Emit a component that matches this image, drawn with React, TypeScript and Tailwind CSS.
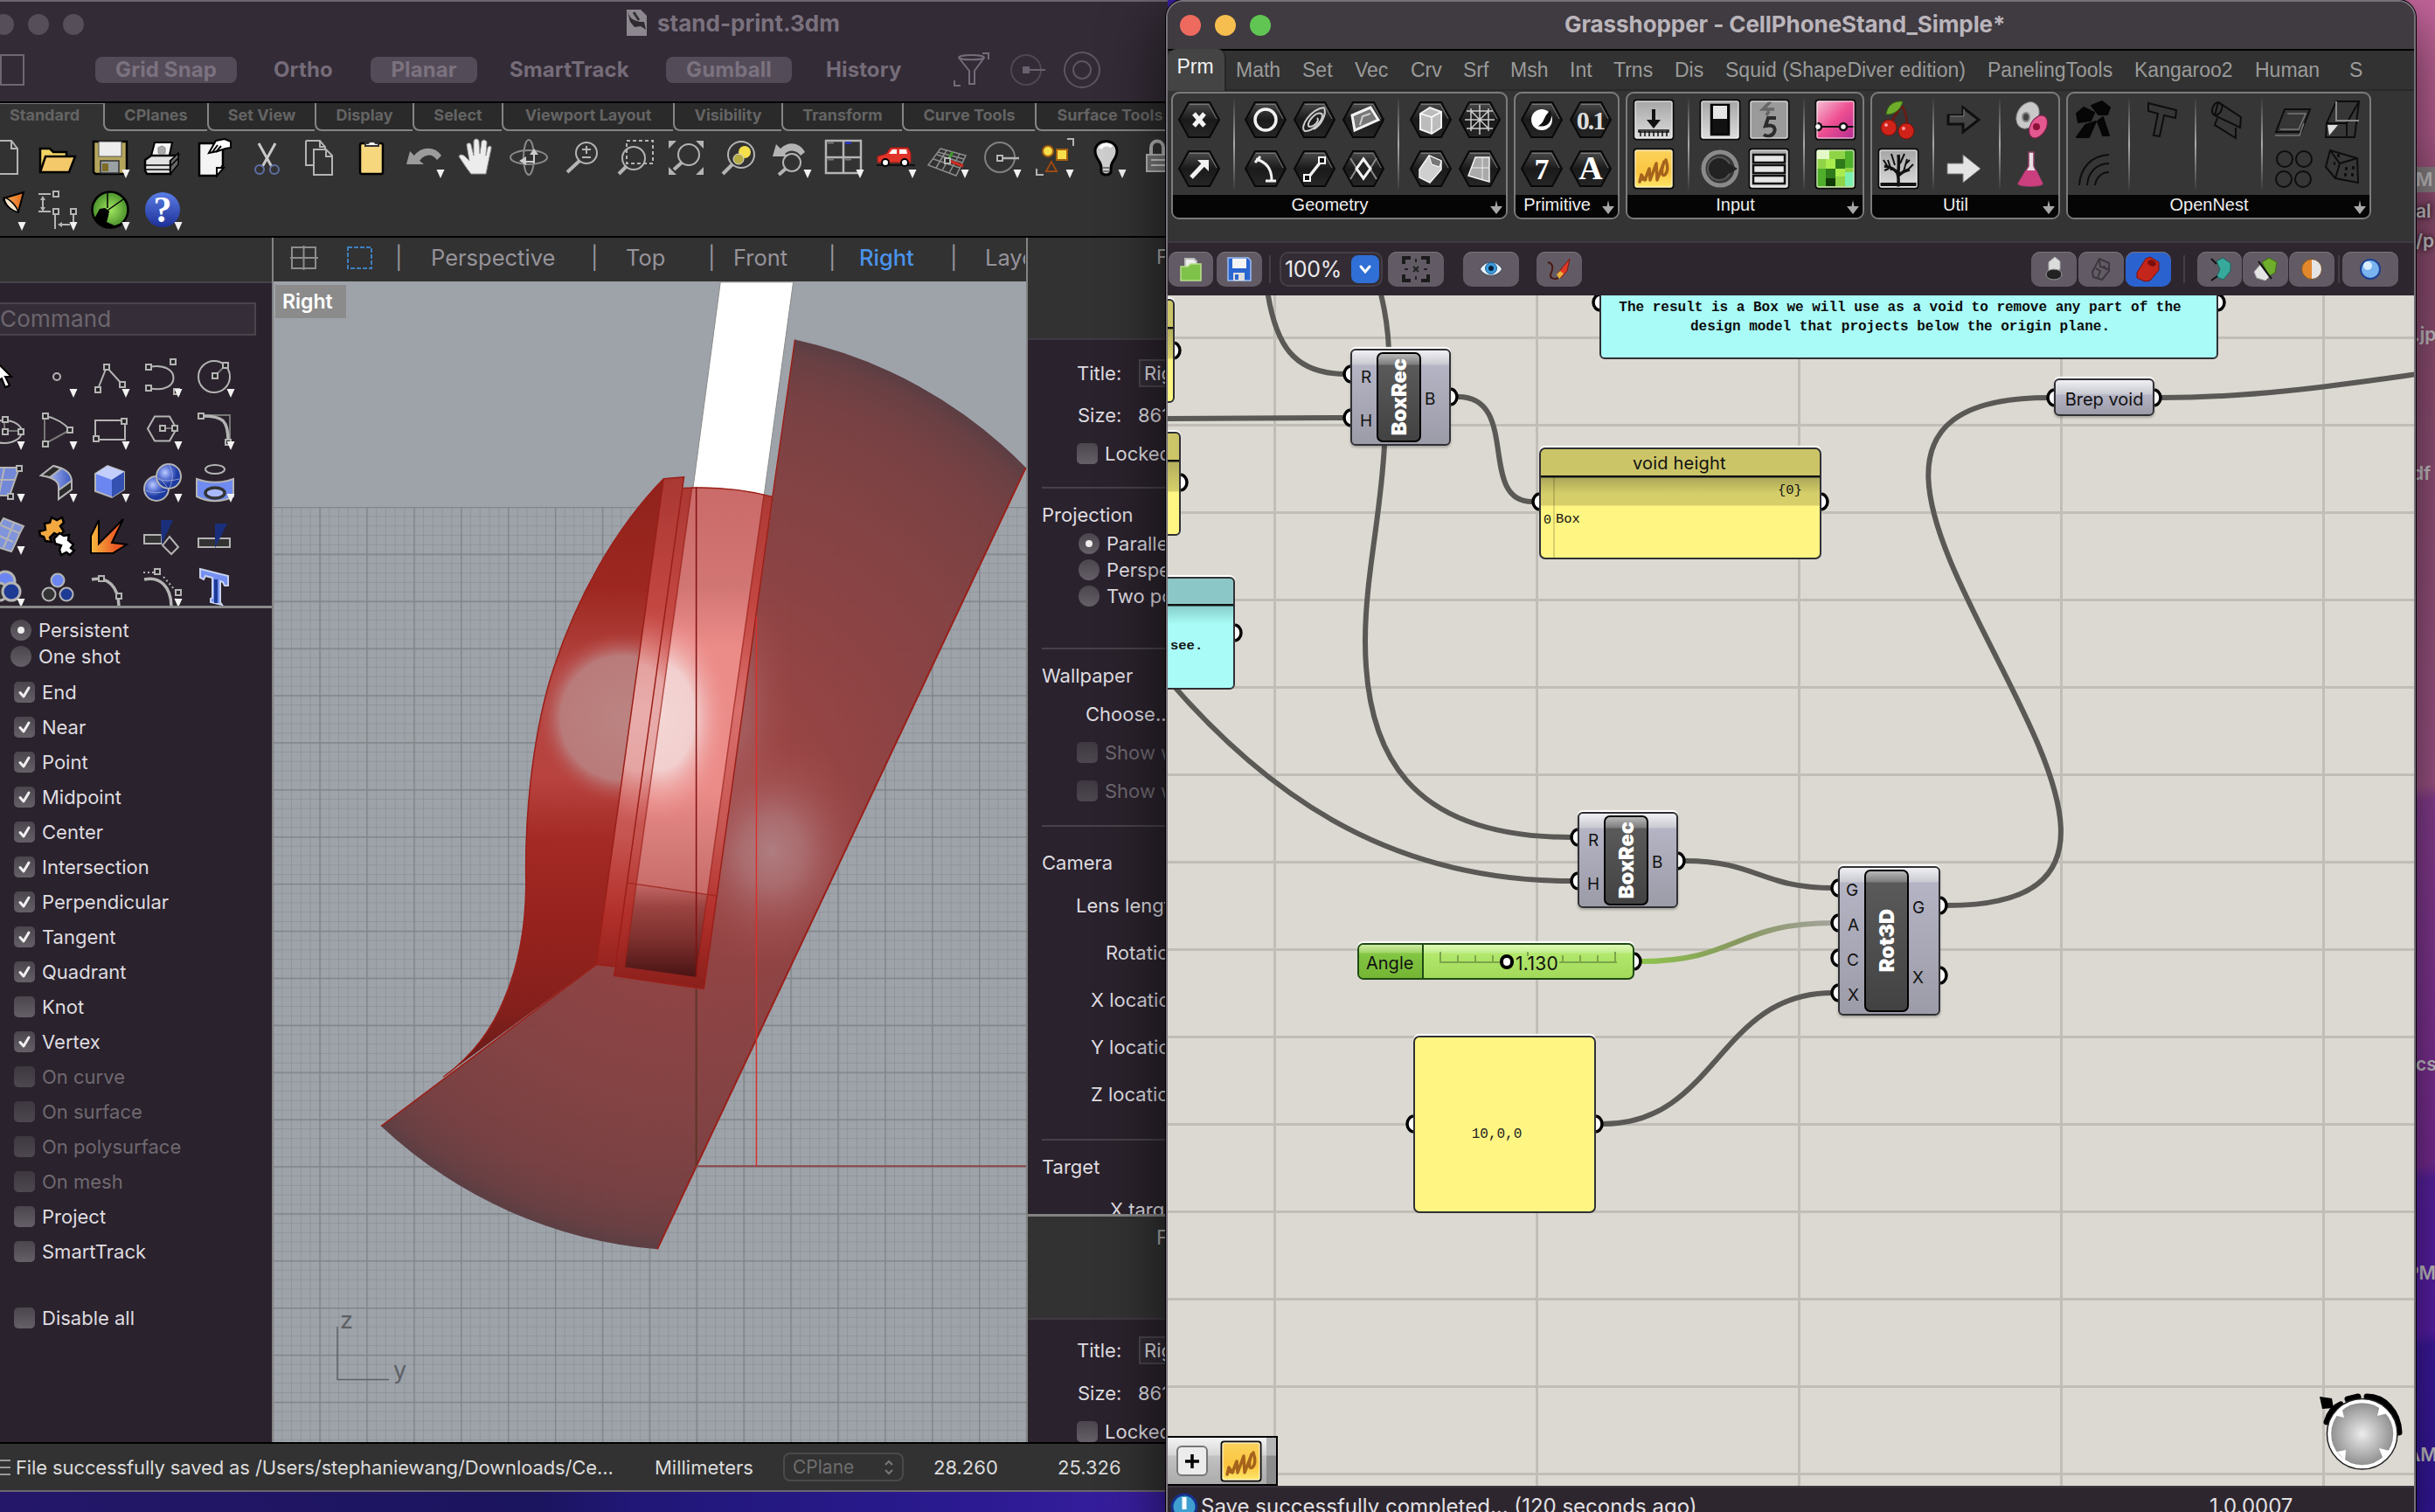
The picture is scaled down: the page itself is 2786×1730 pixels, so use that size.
import React from "react";

type Item = { at: number; node: React.ReactNode };

/* Horizontal run: each item starts at its own distance from the left edge of the row. */
function Line({ items, className = "" }: { items: Item[]; className?: string }) {
  return (
    <div className={"flex items-center " + className}>
      {items.map((it, i) => (
        <div
          key={i}
          className="flex w-0 shrink-0 items-center whitespace-nowrap leading-none"
          style={{ marginLeft: it.at - (i ? items[i - 1].at : 0) }}
        >
          {it.node}
        </div>
      ))}
    </div>
  );
}

/* Vertical run of 30px rows, each centred on its own distance from the top. */
function Stack({ items, className = "" }: { items: Item[]; className?: string }) {
  return (
    <div className={"flex flex-col " + className}>
      {items.map((it, i) => (
        <div
          key={i}
          className="flex h-[30px] shrink-0 items-center whitespace-nowrap leading-none"
          style={{ marginTop: it.at - (i ? items[i - 1].at + 30 : 15) }}
        >
          {it.node}
        </div>
      ))}
    </div>
  );
}

const G = "#b4b4b4";

function Cell({ children, tri = false }: { children?: React.ReactNode; tri?: boolean }) {
  return (
    <svg viewBox="0 0 60 60" className="h-[60px] w-[60px] shrink-0" fill="none" stroke={G} strokeWidth="2">
      {children}
      {tri && <path d="M44.500 44h9l-4.500 10z" fill="#f2f2f2" stroke="none" />}
    </svg>
  );
}

function Sq({ x, y }: { x: number; y: number }) {
  return <rect x={x - 3} y={y - 3} width="6" height="6" fill="#262626" stroke={G} strokeWidth="2" />;
}

function MainToolbar() {
  return (
    <div className="-ml-[25px] flex w-[1361px]">
      <Cell><path d="M12 11h26l7 9v29H12M38 11v9h7" /></Cell>
      <Cell>
        <path d="M11 46V20h11l4 4h15v6" fill="#f3d565" stroke="#000" strokeWidth="2.500" />
        <path d="M11 47l6-18h34l-7 18z" fill="#f4c96a" stroke="#000" strokeWidth="2.500" />
      </Cell>
      <Cell tri>
        <path d="M12 12h38v35l-2 2H14l-2-2z" fill="#b5a55c" stroke="#000" strokeWidth="2.500" />
        <rect x="18" y="12" width="26" height="17" fill="#ececec" stroke="#555" strokeWidth="1" />
        <rect x="20" y="34" width="21" height="14" fill="#9ba1a5" stroke="#333" strokeWidth="1.500" />
        <rect x="22" y="37" width="7" height="9" fill="#7e6c26" stroke="none" />
      </Cell>
      <Cell>
        <path d="M17 32l5-19h20l-4 19z" fill="#f5f5f5" stroke="#000" />
        <path d="M11 33l7-5h30l-8 6v15H13l-2-4z" fill="#e2e2e2" stroke="#000" strokeWidth="2.500" />
        <path d="M40 34l9-9v13l-9 11zM11 39h29M12 44h28M40 40l9-9" fill="#666" stroke="#000" strokeWidth="1.500" />
        <path d="M26 19l4-2 4 2v6l-4 2-4-2z" fill="#aaa" stroke="#888" strokeWidth="1" />
      </Cell>
      <Cell>
        <path d="M13 14h27v25l-7 12H13z" fill="#f4f4f4" stroke="#000" strokeWidth="2.500" />
        <path d="M33 51v-9h8z" fill="#fff" stroke="#000" />
        <path d="M24 25l8-14 10-2 7 3v7l-6 1-9 3z" fill="#fff" stroke="#000" />
        <path d="M28 24l6-8M32 24l6-7" stroke="#000" />
      </Cell>
      <Cell>
        <path d="M21 14l15 27M40 14L25 41" stroke="#c9c9c9" strokeWidth="3" />
        <circle cx="22" cy="44" r="5" stroke="#5e6fa5" /><circle cx="39" cy="44" r="5" stroke="#5e6fa5" />
      </Cell>
      <Cell>
        <path d="M15 11h16l6 7v4M15 11v28h8M31 11v7h6" />
        <path d="M24 21h14l7 7v22H24zM38 21v8h7" />
      </Cell>
      <Cell>
        <rect x="17" y="14" width="26" height="35" rx="2" fill="#f6d77e" stroke="#000" strokeWidth="2.500" />
        <path d="M23 17v-3h3l2-2h5l2 2h3v3z" fill="#f4f4f4" stroke="#333" />
      </Cell>
      <Cell tri><path d="M10 38l4-15 5 5c8-11 24-11 31 0l-5 5c-5-7-13-8-20 1l5 4z" fill="#9b9b9b" stroke="none" /></Cell>
      <Cell>
        <path d="M24 49c-5-6-10-14-14-20 1-3 5-2 7 0l5 5-3-18c0-3 5-3 5 0l3 12V12c0-4 6-4 6 0l1 14 2-14c1-3 6-2 6 1l-1 15 2-9c1-3 5-2 4 1l-4 19-2 10z" fill="#ececec" stroke="#8d8d8d" strokeWidth="1" />
      </Cell>
      <Cell>
        <ellipse cx="30" cy="30" rx="21" ry="8" stroke="#8a8a8a" /><ellipse cx="30" cy="30" rx="6" ry="20" stroke="#8a8a8a" />
        <path d="M31 27l5-7 5 7zM19 34l8-5v10z" fill="#ccc" stroke="none" /><path d="M36 22v15M24 35h12" stroke="#ccc" />
      </Cell>
      <Cell><circle cx="36" cy="25" r="12" /><path d="M28 34L14 47" strokeWidth="4" /><path d="M36 17v9M31 21h10M31 30h10" /></Cell>
      <Cell><path d="M22 11h30v26H22z" strokeDasharray="4 3" /><circle cx="30" cy="31" r="13" /><path d="M22 40l-9 9" strokeWidth="4" /></Cell>
      <Cell>
        <path d="M10 11h9l-9 9zM50 11h-9l9 9zM10 50v-9l9 9zM50 50h-9l9-9z" fill={G} stroke="none" />
        <circle cx="33" cy="27" r="12" /><path d="M25 36l-9 8" strokeWidth="4" />
      </Cell>
      <Cell><circle cx="33" cy="27" r="15" /><circle cx="37" cy="24" r="7" fill="#f4df4a" stroke="none" /><circle cx="30" cy="32" r="6" fill="#b5ab45" stroke="#ddd" strokeWidth="1" /><path d="M23 38L12 49" strokeWidth="4" /></Cell>
      <Cell tri><path d="M9 29l4-14 5 5c9-9 22-7 28 4l-5 4c-4-6-12-8-18-2l4 3z" fill={G} stroke="none" /><circle cx="31" cy="36" r="10" /><path d="M24 43l-8 7" strokeWidth="4" /></Cell>
      <Cell tri><path d="M10 11h40v37H10zM30 11v37M10 30h40" strokeWidth="2.500" /><path d="M32 13.500h7" stroke="#2a36b5" strokeWidth="3" /><path d="M12 13.500h7M12 32.500h7M32 32.500h7" stroke="#777" strokeWidth="2" /></Cell>
      <Cell tri>
        <path d="M8 39h44" stroke="#111" />
        <path d="M9 36v-7l10-3 5-7h20l3 6v11z" fill="#e0342b" stroke="#a31a15" strokeWidth="1" />
        <path d="M22 26l4-5h5v5zM34 21h8l1 5h-9z" fill="#fff" stroke="none" /><circle cx="18" cy="36" r="4" fill="#fff" stroke="#000" /><circle cx="40" cy="36" r="4" fill="#fff" stroke="#000" />
      </Cell>
      <Cell tri>
        <path d="M21 20l29 8-11 23-32-12zM28 22L16 42M35 24L23 45M43 26L31 48M17 27l29 9M13 32l30 10M18 24l30 8" stroke="#8d8d8d" strokeWidth="1.500" />
        <path d="M29 34l6-10" stroke="#3f9b2d" strokeWidth="3" /><path d="M31 34l16 6" stroke="#d02a1e" strokeWidth="3" /><Sq x={29} y={34} />
      </Cell>
      <Cell tri><circle cx="29" cy="30" r="17" stroke="#808080" /><path d="M32 31h19" strokeWidth="2.500" /><Sq x={29} y={31} /></Cell>
      <Cell tri>
        <path d="M46 9h7v8M11 43v7h8" /><circle cx="24" cy="23" r="6" fill="#f7df4c" stroke="#a5600f" /><rect x="34" y="21" width="12" height="12" fill="#f7df4c" stroke="#a5600f" /><path d="M22 46l6-11 6 11z" stroke="#9a4a12" />
      </Cell>
      <Cell tri>
        <path d="M25 42c0-8-7-10-7-19 0-15 25-15 25 0 0 9-7 11-7 19v5c-2 4-9 4-11 0z" fill="#cfcfcf" stroke="#000" strokeWidth="3" /><path d="M24 20c2-5 9-6 13-2" stroke="#fff" strokeWidth="4" /><path d="M27 42h7M27 46h7" stroke="#777" />
      </Cell>
      <Cell><path d="M22 27v-8c0-10 14-10 14 0v8" strokeWidth="4" /><rect x="17" y="27" width="26" height="19" fill="#777" stroke="#bbb" /><path d="M22 33h16M22 39h16" stroke="#ccc" /></Cell>
    </div>
  );
}

function SecondToolbar() {
  return (
    <div className="-ml-[25px] flex">
      <Cell>
        <defs><linearGradient id="cone" x2="1"><stop offset="0" stopColor="#f6b25a" /><stop offset="1" stopColor="#e26a1c" /></linearGradient></defs>
        <path d="M29 17l23-7-6 22c-9-2-16-8-17-15z" fill="url(#cone)" stroke="#000" /><path d="M30 16c5 1 14 9 16 17-8-2-16-9-16-17z" fill="#f8e6cc" stroke="#000" strokeWidth="1.500" />
        <path d="M45.500 44h9l-4.500 10z" fill="#f2f2f2" stroke="none" />
      </Cell>
      <Cell tri><path d="M9 12h14M9 32h14M28 36v16M49 32v16M14 16v14M33 47h12" /><path d="M11 19l3-5 3 5zM11 27l3 5 3-5zM36 44l-5 3 5 3z" fill={G} stroke="none" /><Sq x={29} y={12} /><Sq x={29} y={32} /><Sq x={49} y={32} /></Cell>
      <Cell tri>
        <defs><radialGradient id="gh"><stop offset="0" stopColor="#a4e862" /><stop offset="1" stopColor="#48902a" /></radialGradient></defs>
        <circle cx="31" cy="30" r="20.500" fill="url(#gh)" stroke="#000" strokeWidth="2.500" />
        <path d="M28 10v18M46 18L29 30" stroke="#000" strokeWidth="1.500" /><path d="M13 40l6-11 6-1 5 3-1 6-2 7 9 4 9-3-2 4-9 2-4 0-8-3-5-2z" fill="#000" stroke="none" />
      </Cell>
      <Cell tri>
        <defs><linearGradient id="hp" x2="0" y2="1"><stop offset="0" stopColor="#5a7ee6" /><stop offset="1" stopColor="#1d2f96" /></linearGradient></defs>
        <circle cx="31" cy="30" r="20" fill="url(#hp)" stroke="none" />
        <text x="31" y="44" textAnchor="middle" className="font-['Liberation_Serif'] text-[42px] font-bold" fill="#fff" stroke="none">?</text>
      </Cell>
    </div>
  );
}

function Palette() {
  return (
    <div className="-ml-[25px] grid h-[292px] w-[300px] grid-cols-[repeat(5,60px)] auto-rows-[60px] overflow-hidden">
      <Cell><path d="M22 14v22l5-4 4 10 5-2-5-10h7z" fill="#fff" stroke="#000" /></Cell>
      <Cell tri><circle cx="30" cy="30" r="4" /></Cell>
      <Cell tri><path d="M17 44L27 19l18 20" /><Sq x={17} y={45} /><Sq x={27} y={19} /><Sq x={45} y={39} /></Cell>
      <Cell tri><path d="M15 19c38-8 38 33 0 24" /><Sq x={15} y={19} /><Sq x={43} y={13} /><Sq x={15} y={43} /><Sq x={47} y={47} /></Cell>
      <Cell tri><circle cx="30" cy="30" r="18" /><path d="M31 29l12-12" stroke="#777" /><Sq x={31} y={29} /><Sq x={43} y={17} /></Cell>

      <Cell tri><ellipse cx="30" cy="33" rx="20" ry="13" /><path d="M30 20v12h18" stroke="#777" /><Sq x={31} y={19} /><Sq x={31} y={33} /><Sq x={49} y={33} /></Cell>
      <Cell tri><path d="M16 15v32l29-16" stroke="#777" /><path d="M17 15c12 2 22 9 27 15" /><Sq x={17} y={15} /><Sq x={17} y={47} /><Sq x={45} y={31} /></Cell>
      <Cell tri><path d="M14 20h34v22H14z" /><Sq x={47} y={21} /><Sq x={15} y={41} /></Cell>
      <Cell tri><path d="M22 15.500h17l8 14-8 14H22l-8-14z" /><path d="M31 29h14" stroke="#777" /><Sq x={31} y={29} /><Sq x={45} y={29} /></Cell>
      <Cell tri><path d="M15 14h33v30" stroke="#777" /><path d="M17 15c24 0 29 6 29 29" strokeWidth="3.500" /><Sq x={15} y={15} /><Sq x={46} y={45} /></Cell>

      <Cell tri><path d="M12 14h35L36 46H12z" fill="#7488d8" stroke={G} /><path d="M12 28h30M30 14l-6 30" /><Sq x={47} y={15} /><Sq x={37} y={47} /></Cell>
      <Cell tri>
        <defs><linearGradient id="shl"><stop offset="0" stopColor="#c9d4ff" /><stop offset="1" stopColor="#3c58c0" /></linearGradient></defs>
        <path d="M12 23l14-11c15 3 21 10 21 18v9L32 50V36c0-6-7-11-20-13z" fill="url(#shl)" /><path d="M12 23l14-11 9 3-13 10z" fill="#2a2a2a" /><path d="M32 50V40l15-11v10z" fill="#2a2a2a" />
      </Cell>
      <Cell tri>
        <path d="M14 21l14-9 19 7v20l-14 9-19-7z" fill="#6b86f0" /><path d="M14 21l14-9 19 7-14 9z" fill="#c3cffa" stroke="none" /><path d="M33 28l14-9v20l-14 9z" fill="#3450b0" stroke="none" />
      </Cell>
      <Cell tri>
        <defs><radialGradient id="sp" cx=".35" cy=".35"><stop offset="0" stopColor="#bccaff" /><stop offset=".5" stopColor="#6179d8" /><stop offset="1" stopColor="#1c3aa0" /></radialGradient></defs>
        <circle cx="24" cy="38" r="14" fill="url(#sp)" /><circle cx="38" cy="24" r="14" fill="url(#sp)" /><path d="M24 25c7 3 10 8 13 13M12 40c8 4 15 3 22 1M38 10c6 10 5 18 1 27M26 27c8 3 16 2 24 0" strokeWidth="1" stroke="#93a0cf" />
      </Cell>
      <Cell tri>
        <ellipse cx="31" cy="16" rx="11" ry="5" /><path d="M10 27c13 5 29 5 42 0v20c-13 7-29 7-42 0z" fill="#6f8bf0" /><ellipse cx="31" cy="43" rx="11" ry="6" fill="#a9baff" stroke="#333" strokeWidth="3.500" />
      </Cell>

      <Cell tri><path d="M29 12l23 9c-6 10-8 18-14 29L12 42z" fill="#8094dc" /><path d="M26 20l21 9M22 31l18 8M41 17L29 46" /></Cell>
      <Cell>
        <path d="M10 27l7-2-1-7 6-1 2-6 6 3 6-3 2 6-4 4 4 6-5 5-6-3-5 5 2 5-7-1-2-5-4-1z" fill="#f3a93f" stroke="#000" strokeWidth="2.500" />
        <path d="M27 35l6-6 5 3 6-1-1 6 6 5-3 4 4 3-5 5-4-3-6 3-2-6 2-5-7-2z" fill="#fff" stroke="#000" strokeWidth="2.500" />
      </Cell>
      <Cell>
        <defs><linearGradient id="ex" x2="1" y2="0"><stop offset="0" stopColor="#f7b93e" /><stop offset=".7" stopColor="#ec5a25" /></linearGradient></defs>
        <path d="M9 52V32l9-18v27L46 13 33 40l17 2-16 10z" fill="url(#ex)" stroke="#000" strokeWidth="2" />
      </Cell>
      <Cell><path d="M10 31h20v10H10z" fill="#333" /><path d="M31 43l8-10 10 12-8 8z" /><path d="M29 14h14L30 42z" fill="#1a2f7c" stroke="none" /></Cell>
      <Cell><path d="M12 35h36v10H12z" fill="#333" /><path d="M31 18h14L31 46z" fill="#1a2f7c" stroke="none" /></Cell>

      <Cell tri><circle cx="31" cy="24" r="11" fill="#6b86f0" strokeWidth="3" /><circle cx="24" cy="36" r="10" fill="#333" strokeWidth="3" /><circle cx="38" cy="36" r="10" fill="#1d3a94" strokeWidth="3" /></Cell>
      <Cell><circle cx="31" cy="23" r="7.500" fill="#6b86f0" /><circle cx="21" cy="39" r="7.500" fill="#333" /><circle cx="41" cy="39" r="7.500" fill="#1d3a94" /></Cell>
      <Cell><path d="M10 22c18-4 31 8 31 32" strokeWidth="3.500" /><Sq x={21} y={21} /><Sq x={41} y={41} /></Cell>
      <Cell tri><path d="M10 22c18-4 31 8 31 32" strokeWidth="3.500" /><path d="M9 14h14M32 19l14 16v12" strokeDasharray="2 3" /><Sq x={25} y={13} /><Sq x={49} y={37} /></Cell>
      <Cell><path d="M14 10l32 8v11h-4l-2-4-3-1v24l2 3-13-3v-4l2-1V20l-8-2-2 4-4-2z" fill="#7590f2" stroke="#c9d2ee" /><path d="M32 22v27" stroke="#1d3a94" strokeWidth="4" /></Cell>
    </div>
  );
}

function Check({ on = false, dim = false }: { on?: boolean; dim?: boolean }) {
  return (
    <div className={"flex h-6 w-6 items-center justify-center rounded-[5px] bg-gradient-to-b from-[#4b464d] to-[#656068] " + (dim ? "opacity-60" : "")}>
      {on && (
        <svg viewBox="0 0 24 24" className="h-6 w-6" fill="none" stroke="#f0eff0" strokeWidth="3" strokeLinecap="round" strokeLinejoin="round"><path d="M7 12.500l4 4.500 6-10" /></svg>
      )}
    </div>
  );
}

function Radio({ on = false }: { on?: boolean }) {
  return (
    <div className="flex h-6 w-6 items-center justify-center rounded-full bg-gradient-to-b from-[#4b464d] to-[#656068]">
      {on && <div className="h-[8px] w-[8px] rounded-full bg-[#eee]" />}
    </div>
  );
}

const SNAPS: [string, boolean, boolean, number][] = [
  ["End", true, false, 792], ["Near", true, false, 832], ["Point", true, false, 872], ["Midpoint", true, false, 912],
  ["Center", true, false, 952], ["Intersection", true, false, 992], ["Perpendicular", true, false, 1032],
  ["Tangent", true, false, 1072], ["Quadrant", true, false, 1112], ["Knot", false, false, 1152], ["Vertex", true, false, 1192],
  ["On curve", false, true, 1232], ["On surface", false, true, 1272], ["On polysurface", false, true, 1312],
  ["On mesh", false, true, 1352], ["Project", false, false, 1392], ["SmartTrack", false, false, 1432], ["Disable all", false, false, 1508],
];

function LeftPanel() {
  return (
    <div className="flex h-[1378px] w-[311px] shrink-0 flex-col overflow-hidden bg-[#2a222c]">
      <div className="h-[52px] shrink-0 border-b-2 border-[#48434a] bg-[#323232]" />
      <div className="mt-[22px] flex h-[38px] w-[293px] shrink-0 items-center border-2 border-l-0 border-[#4a444c] bg-[#352e38] pb-[2px] text-[26px] tracking-[0.200px] text-[#6c666e]">Command</div>
      <div className="mt-[17px] shrink-0"><Palette /></div>
      <div className="h-[3px] shrink-0 bg-[#8a8a8a]" />
      <Stack
        className="text-[22px] text-[#dfdce0]"
        items={[
          { at: 25, node: <div className="ml-3 flex items-center gap-[8px]"><Radio on /><span>Persistent</span></div> },
          { at: 55, node: <div className="ml-3 flex items-center gap-[8px]"><Radio /><span>One shot</span></div> },
          ...SNAPS.map(([t, on, dim, y]) => ({
            at: y - 696,
            node: <div className="ml-4 flex items-center gap-[8px]"><Check on={on} dim={dim} /><span className={dim ? "text-[#6f6971]" : ""}>{t}</span></div>,
          })),
        ]}
      />
    </div>
  );
}

function Model() {
  const ns = "non-scaling-stroke" as const;
  return (
    <svg viewBox="313 322 861 1328" className="block h-[1328px] w-[861px]">
      <defs>
        <pattern id="minor" x="796.600" y="1334.300" width="10.780" height="10.780" patternUnits="userSpaceOnUse"><path d="M0 .5H10.780M.5 0V10.780" stroke="#8f959b" strokeWidth="1" fill="none" /></pattern>
        <pattern id="major" x="796.600" y="1334.300" width="53.900" height="53.900" patternUnits="userSpaceOnUse"><path d="M0 .7H53.900M.7 0V53.900" stroke="#808588" strokeWidth="1.500" fill="none" /></pattern>
        <linearGradient id="lobe" gradientUnits="userSpaceOnUse" x1="0" y1="319" x2="0" y2="1280">
          <stop offset="0" stopColor="#8f231c" /><stop offset=".18" stopColor="#9d2720" /><stop offset=".32" stopColor="#b54541" /><stop offset=".5" stopColor="#b8433f" /><stop offset=".6" stopColor="#a42a25" /><stop offset=".75" stopColor="#96221d" /><stop offset=".88" stopColor="#85201c" /><stop offset="1" stopColor="#601a19" />
        </linearGradient>
        <linearGradient id="strip" gradientUnits="userSpaceOnUse" x1="0" y1="319" x2="0" y2="1136">
          <stop offset="0" stopColor="#aa3833" /><stop offset=".25" stopColor="#c34641" /><stop offset=".45" stopColor="#d9706d" /><stop offset=".7" stopColor="#c65450" /><stop offset=".85" stopColor="#b3302b" /><stop offset="1" stopColor="#8a1f1b" />
        </linearGradient>
        <linearGradient id="inner" gradientUnits="userSpaceOnUse" x1="0" y1="332" x2="0" y2="975">
          <stop offset="0" stopColor="#ca6a69" /><stop offset=".25" stopColor="#d27674" /><stop offset=".4" stopColor="#ec8c89" /><stop offset=".75" stopColor="#ec8c89" /><stop offset=".9" stopColor="#d47a77" /><stop offset="1" stopColor="#c96d6b" />
        </linearGradient>
        <linearGradient id="foot" gradientUnits="userSpaceOnUse" x1="0" y1="968" x2="0" y2="1117"><stop offset="0" stopColor="#c46866" /><stop offset=".25" stopColor="#9a4340" /><stop offset=".6" stopColor="#7c302e" /><stop offset="1" stopColor="#4a1313" /></linearGradient>
        <radialGradient id="body" gradientUnits="userSpaceOnUse" cx="0" cy="0" r="1" gradientTransform="translate(778 818) scale(1090 740)"><stop offset="0" stopColor="#a24240" /><stop offset=".35" stopColor="#924040" /><stop offset=".7" stopColor="#823f40" /><stop offset=".88" stopColor="#763d3f" /><stop offset=".96" stopColor="#673c3f" /><stop offset="1" stopColor="#583a3f" /></radialGradient>
        <radialGradient id="glow"><stop offset="0" stopColor="#af7d80" /><stop offset=".3" stopColor="#ad7275" stopOpacity=".85" /><stop offset=".65" stopColor="#a85a5b" stopOpacity=".4" /><stop offset="1" stopColor="#a54848" stopOpacity="0" /></radialGradient>
        <radialGradient id="spot"><stop offset="0" stopColor="#bb8482" /><stop offset=".72" stopColor="#b97b7a" /><stop offset=".85" stopColor="#b75957" stopOpacity=".75" /><stop offset="1" stopColor="#b54541" stopOpacity="0" /></radialGradient>
        <radialGradient id="shine"><stop offset="0" stopColor="#f4d6d5" /><stop offset=".5" stopColor="#f1cfce" /><stop offset="1" stopColor="#ec8c89" stopOpacity="0" /></radialGradient>
        <clipPath id="cl"><path d="M700 319C590 395 490 510 430 645C390 740 372 860 375 965C375 1050 350 1110 325 1150C290 1210 235 1250 180 1277L541 1097z" /></clipPath>
        <clipPath id="ci"><path d="M767 332Q860 332 937 344L804 985L635 968z" /></clipPath>
        <clipPath id="cs"><path d="M700 319L748 316L744 334Q860 330 957 348L795 1136L583 1115V1100L541 1097z" /></clipPath>
        <clipPath id="cb"><path d="M1010 96L1555 301L685 1553L777 1136L795 1136z" /></clipPath>
      </defs>
      <rect x="313" y="322" width="861" height="1328" fill="#9ea3aa" />
      <rect x="313" y="580" width="861" height="1070" fill="url(#minor)" />
      <rect x="313" y="580" width="861" height="1070" fill="url(#major)" />
      <g transform="translate(420 320) scale(.4847 .7143)">
        <path d="M834 4H1006L937 346H767z" fill="#fff" stroke="#8a8a8a" strokeWidth="1" vectorEffect={ns} />
        <path d="M1010 96A1087 738 0 0 1 1555 301L685 1553A1087 738 0 0 1 33 1356L541 1097L583 1100V1115L795 1136z" fill="url(#body)" fillOpacity=".96" />
        <g clipPath="url(#cb)"><ellipse cx="955" cy="915" rx="250" ry="190" fill="url(#glow)" /><ellipse cx="860" cy="680" rx="150" ry="230" fill="url(#glow)" opacity=".55" /></g>
        <g clipPath="url(#cl)"><rect x="150" y="300" width="600" height="1000" fill="url(#lobe)" /><ellipse cx="605" cy="702" rx="205" ry="138" fill="url(#spot)" /></g>
        <g clipPath="url(#cs)"><rect x="500" y="300" width="500" height="860" fill="url(#strip)" /><ellipse cx="640" cy="702" rx="150" ry="170" fill="url(#shine)" opacity=".6" /></g>
        <g clipPath="url(#ci)"><rect x="600" y="320" width="400" height="700" fill="url(#inner)" /><ellipse cx="690" cy="700" rx="165" ry="170" fill="url(#shine)" /></g>
        <path d="M635 968L804 985L776 1117L608 1101z" fill="url(#foot)" />
        <g fill="none" stroke="#9a1f18" strokeWidth="1.500">
          <path vectorEffect={ns} d="M700 319C590 395 490 510 430 645C390 740 372 860 375 965C375 1050 350 1110 325 1150C290 1210 235 1250 180 1277" />
          <path vectorEffect={ns} d="M700 319L748 316L583 1115L795 1136L957 348Q860 330 744 334M700 319L541 1097L583 1100M957 348L1010 96M541 1097L33 1356" />
          <path vectorEffect={ns} d="M613 966L825 987M767 332L608 1101M937 344L776 1117" strokeOpacity=".7" />
          <path vectorEffect={ns} d="M1555 301L685 1553" strokeWidth="2" />
          <path vectorEffect={ns} d="M777 332V1117" stroke="#7e1210" />
          <path vectorEffect={ns} d="M777 1136V1420" stroke="#5e3526" strokeWidth="2" />
          <path vectorEffect={ns} d="M777 1420H1556" stroke="#8c4648" strokeWidth="2" />
          <path vectorEffect={ns} d="M919 540V1420" stroke="#d7302a" />
        </g>
      </g>
      <path d="M386 1518V1578.500H445" stroke="#5d6064" strokeWidth="1.500" fill="none" />
      <text x="389" y="1520" className="font-['Inter'] text-[27px]" fill="#5d6064">z</text>
      <text x="450" y="1577" className="font-['Inter'] text-[27px]" fill="#5d6064">y</text>
    </svg>
  );
}

function ViewportArea() {
  return (
    <div className="flex w-[865px] shrink-0 flex-col border-l-2 border-r-2 border-[#838383] bg-[#323232]">
      <Line
        className="h-[50px] shrink-0 pb-[4px] text-[25.500px] text-[#96939a]"
        items={[
          { at: 19, node: <svg viewBox="0 0 32 28" className="h-7 w-8 shrink-0" fill="none" stroke="#8d8d8d" strokeWidth="2"><rect x="2" y="2" width="27" height="24" /><path d="M15.500 0v28M0 14h32" /></svg> },
          { at: 83, node: <svg viewBox="0 0 32 28" className="h-7 w-8 shrink-0" fill="none" stroke="#3f7fc0" strokeWidth="2"><rect x="2" y="2" width="27" height="24" strokeDasharray="5 2" /></svg> },
          { at: 139, node: "|" }, { at: 180, node: "Perspective" }, { at: 363, node: "|" }, { at: 403, node: "Top" }, { at: 497, node: "|" },
          { at: 526, node: "Front" }, { at: 635, node: "|" }, { at: 670, node: <span className="font-medium text-[#4a93ea]">Right</span> },
          { at: 774, node: "|" }, { at: 814, node: <span className="block w-[46px] shrink-0 overflow-hidden leading-[34px]">Layout</span> },
        ]}
      />
      <div className="relative">
        <Model />
        <div className="absolute left-[2px] top-[4px] flex h-[38px] w-[81px] items-center bg-[#8b8b8b] pl-2 text-[23px] font-semibold text-white">Right</div>
      </div>
    </div>
  );
}

const Sep = () => <div className="ml-4 h-[2px] w-[142px] bg-[#48414a]" />;

function RightPanel() {
  const ind = (n: number, t: React.ReactNode) => ({ at: n, node: t });
  const title = <div className="flex items-center"><span className="ml-[56px] w-[71px]">Title:</span><div className="flex h-8 w-16 items-center border-2 border-[#4a444c] bg-[#312a34] pl-1">Right</div></div>;
  const size = <div className="flex"><span className="ml-[57px] w-[69px]">Size:</span>861</div>;
  const lock = <div className="ml-[56px] flex items-center gap-2"><Check />Locked</div>;
  return (
    <div className="flex h-[1378px] w-[160px] shrink-0 flex-col overflow-hidden bg-[#2a222c] text-[22px] text-[#dfdce0]">
      <div className="h-[117px] shrink-0 border-b-2 border-[#3f3841] bg-[#323232]"><div className="ml-[147px] mt-[8px] text-[23px] leading-[28px] text-[#aaa]">F</div></div>
      <Stack
        className="h-[1000px] shrink-0 overflow-hidden"
        items={[
          ind(38, title), ind(86, size), ind(130, lock), ind(169, <Sep />),
          ind(200, <span className="ml-4">Projection</span>),
          ind(233, <div className="ml-[58px] flex items-center gap-2"><Radio on />Parallel</div>),
          ind(263, <div className="ml-[58px] flex items-center gap-2"><Radio />Perspective</div>),
          ind(293, <div className="ml-[58px] flex items-center gap-2"><Radio />Two point</div>),
          ind(353, <Sep />), ind(384, <span className="ml-4">Wallpaper</span>),
          ind(428, <span className="ml-[66px]">Choose...</span>),
          ind(472, <div className="ml-[56px] flex items-center gap-2 text-[#6f6971]"><Check dim />Show wallpaper</div>),
          ind(516, <div className="ml-[56px] flex items-center gap-2 text-[#6f6971]"><Check dim />Show wallpaper</div>),
          ind(556, <Sep />), ind(598, <span className="ml-4">Camera</span>),
          ind(647, <span className="ml-[55px]">Lens length</span>), ind(701, <span className="ml-[89px]">Rotation</span>),
          ind(755, <span className="ml-[72px]">X location</span>), ind(809, <span className="ml-[72px]">Y location</span>), ind(863, <span className="ml-[72px]">Z location</span>),
          ind(915, <Sep />), ind(946, <span className="ml-4">Target</span>), ind(995, <span className="ml-[94px]">X target</span>),
        ]}
      />
      <div className="h-[3px] shrink-0 bg-[#838383]" />
      <div className="h-[118px] shrink-0 border-b-2 border-[#3f3841] bg-[#323232]"><div className="ml-[147px] mt-[10px] text-[23px] leading-[28px] text-[#aaa]">F</div></div>
      <Stack items={[ind(35, title), ind(84, size), ind(128, lock)]} />
    </div>
  );
}

function RhinoTab({ w, children }: { w: string; children: React.ReactNode }) {
  return (
    <div className={"flex h-8 shrink-0 items-start justify-center overflow-hidden whitespace-nowrap rounded-bl-[8px] border-b-2 border-l-2 border-[#858585] bg-[#2a2a2a] " + w}>{children}</div>
  );
}

const Pill = ({ children, w }: { children: React.ReactNode; w: string }) => (
  <div className={"flex h-[30px] shrink-0 items-center justify-center rounded-[8px] bg-[#544b58] text-[#7b727f] " + w}>{children}</div>
);

function Rhino() {
  return (
    <div className="absolute left-0 top-0 flex h-[1707px] w-[1336px] flex-col overflow-hidden border-b-2 border-t-2 border-[#6c6570] bg-[#332b36]">
      <Line
        className="h-[52px] shrink-0"
        items={[
          { at: -8, node: <div className="h-6 w-6 shrink-0 rounded-full bg-[#564e59]" /> },
          { at: 32, node: <div className="h-6 w-6 shrink-0 rounded-full bg-[#564e59]" /> },
          { at: 72, node: <div className="h-6 w-6 shrink-0 rounded-full bg-[#564e59]" /> },
          { at: 717, node: <svg viewBox="0 0 23 30" className="mb-[4px] h-[30px] w-[23px] shrink-0"><path d="M0 0h16l7 7v23H0z" fill="#8d888f" /><path d="M1 2c3 10 8 10 14 12l5 0 2 9-6-4-7 1-5-6z" fill="#2e2a30" /><path d="M8 3l6 9" stroke="#333" strokeWidth="3" /></svg> },
          { at: 752, node: <span className="pb-[3px] text-[26px] font-bold text-[#7a717e]">stand-print.3dm</span> },
        ]}
      />
      <Line
        className="h-[62px] shrink-0 pb-[10px] text-[24px] font-bold tracking-[0.100px] text-[#756c79]"
        items={[
          { at: 0, node: <div className="h-[36px] w-[28px] shrink-0 border-2 border-[#6f6673]" /> },
          { at: 109, node: <Pill w="w-[162px]">Grid Snap</Pill> }, { at: 313, node: "Ortho" },
          { at: 424, node: <Pill w="w-[122px]">Planar</Pill> }, { at: 583, node: "SmartTrack" },
          { at: 762, node: <Pill w="w-[144px]">Gumball</Pill> }, { at: 945, node: "History" },
          { at: 1090, node: <svg viewBox="0 0 44 44" className="h-11 w-11 shrink-0" fill="none" stroke="#756c79" strokeWidth="2"><path d="M34 3h7v7M2 34v6h7M7 8c0-4 29-4 29 0l-11 15v15h-6V23zM7 8c3 3 26 3 29 0" /></svg> },
          { at: 1154, node: <svg viewBox="0 0 44 44" className="h-11 w-11 shrink-0" fill="none" stroke="#4f4753" strokeWidth="2"><circle cx="20" cy="22" r="17" /><path d="M18 22h24" stroke="#6a616e" /><rect x="16" y="18" width="8" height="8" fill="#6a616e" stroke="none" /></svg> },
          { at: 1216, node: <svg viewBox="0 0 44 44" className="h-11 w-11 shrink-0" fill="none" stroke="#5d5561" strokeWidth="2"><circle cx="22" cy="22" r="20" /><circle cx="22" cy="22" r="10" /></svg> },
        ]}
      />
      <div className="flex h-[34px] shrink-0 border-t-2 border-black bg-[#323232] text-[18px] font-bold text-[#646464]">
        <div className="w-[118px] shrink-0 border-t border-[#777] pl-[11px]"><span className="relative -top-px">Standard</span></div>
        <RhinoTab w="w-[119px]">CPlanes</RhinoTab><RhinoTab w="w-[123px]">Set View</RhinoTab><RhinoTab w="w-[112px]">Display</RhinoTab>
        <RhinoTab w="w-[102px]">Select</RhinoTab><RhinoTab w="w-[196px]">Viewport Layout</RhinoTab><RhinoTab w="w-[124px]">Visibility</RhinoTab>
        <RhinoTab w="w-[138px]">Transform</RhinoTab><RhinoTab w="w-[152px]">Curve Tools</RhinoTab><RhinoTab w="w-[170px]">Surface Tools</RhinoTab>
      </div>
      <div className="h-[120px] shrink-0 bg-[#323232]"><MainToolbar /><SecondToolbar /></div>
      <div className="h-[2px] shrink-0 bg-black" />
      <div className="flex h-[1378px] shrink-0"><LeftPanel /><ViewportArea /><RightPanel /></div>
      <Line
        className="h-[55px] shrink-0 border-t-2 border-black bg-[#323232] text-[22px] text-[#dcdcdc]"
        items={[
          { at: 0, node: <div className="flex h-[18px] w-[12px] shrink-0 flex-col justify-between"><i className="h-[2px] bg-[#999]" /><i className="h-[2px] bg-[#999]" /><i className="h-[2px] bg-[#999]" /></div> },
          { at: 18, node: <span className="tracking-[-0.120px]">File successfully saved as /Users/stephaniewang/Downloads/Ce...</span> },
          { at: 749, node: "Millimeters" },
          { at: 896, node: <div className="flex h-[33px] w-[138px] shrink-0 items-center justify-between rounded-[8px] border-2 border-[#4a4a4a] px-[9px] text-[21px] text-[#6e6e6e]">CPlane<svg viewBox="0 0 12 20" className="h-5 w-3" fill="none" stroke="#777" strokeWidth="2"><path d="M2 7l4-4 4 4M2 13l4 4 4-4" /></svg></div> },
          { at: 1068, node: "28.260" }, { at: 1210, node: "25.326" },
        ]}
      />
    </div>
  );
}

function Hex({ children }: { children: React.ReactNode }) {
  return (
    <svg viewBox="0 0 48 48" className="h-12 w-12 shrink-0" fill="none" stroke="#f2f2f2" strokeWidth="2.500">
      <path d="M12 4h24l11 20-11 20H12L1 24z" fill="url(#hexf)" stroke="#080808" strokeWidth="2" />
      <path d="M13 6.500h22L44 23" stroke="#7a7a7a" strokeWidth="1" />
      {children}
    </svg>
  );
}
function Tile({ children, fill = "url(#gry)" }: { children: React.ReactNode; fill?: string }) {
  return (
    <svg viewBox="0 0 48 48" className="h-12 w-12 shrink-0" fill="none" stroke="#111" strokeWidth="2.500">
      <rect x="1.500" y="1.500" width="45" height="45" rx="3" fill={fill} stroke="#0c0c0c" strokeWidth="2" />
      {children}
      <rect x="3" y="3" width="42" height="42" rx="2" stroke="#fff" strokeOpacity=".6" strokeWidth="1.500" />
    </svg>
  );
}
function Bare({ children }: { children?: React.ReactNode }) {
  return <svg viewBox="0 0 48 48" className="h-12 w-12 shrink-0" fill="none" stroke="#0d0d0d" strokeWidth="2">{children}</svg>;
}
const Squiggle = () => (
  <Tile fill="url(#yel)"><path d="M8 39l2-8 4 6 5-13 1 13 7-19 1 19 8-21c-4 12-3 17 1 15 4-4 3-11 1-17M9 36h6" stroke="#a5631c" strokeWidth="3.500" strokeLinejoin="round" strokeLinecap="round" /></Tile>
);
const Col = ({ a, b }: { a: React.ReactNode; b?: React.ReactNode }) => <div className="flex flex-col gap-[8px]">{a}{b}</div>;
const VSep = () => <div className="h-[108px] w-[2px] shrink-0 bg-gradient-to-b from-transparent via-[#a8a8a8] to-transparent" />;

function Group({ name, className, items }: { name: string; className: string; items: Item[] }) {
  return (
    <div className={"flex h-[146px] shrink-0 flex-col overflow-hidden rounded-[9px] border-2 border-[#7b7b7b] bg-[#363636] " + className}>
      <Line className="h-[116px] shrink-0" items={items} />
      <div className="relative flex grow items-center justify-center bg-[#050505] pb-[4px] pr-[22px] font-['Liberation_Sans'] text-[20px] leading-none text-[#eee]">
        {name}
        <svg viewBox="0 0 14 16" className="absolute right-[4px] top-[6px] h-4 w-3.5"><path d="M7 0l1.500 7H14L7 16 0 7h5.500z" fill="#a8a8a8" /></svg>
      </div>
    </div>
  );
}

function Ribbon() {
  return (
    <div className="flex h-[170px] shrink-0 items-start bg-[#343434] pl-[4px] pt-[1px]">
      <Group name="Geometry" className="w-[385px]" items={[
        { at: 6, node: <Col
          a={<Hex><path d="M18 17l12 14M30 17L18 31" strokeWidth="5" /></Hex>}
          b={<Hex><path d="M15 34L29 19" strokeWidth="5" /><path d="M22 14h13v13z" fill="#f2f2f2" stroke="none" /></Hex>} /> },
        { at: 69, node: <VSep /> },
        { at: 82, node: <Col
          a={<Hex><circle cx="24" cy="24" r="12" strokeWidth="3.500" /></Hex>}
          b={<Hex><path d="M13 13c14 4 18 14 18 24M24 38h12M12 17l6-7" strokeWidth="3" /></Hex>} /> },
        { at: 138, node: <Col
          a={<Hex><path d="M35 10C20 12 6 32 13 37c9 1 24-15 19-20-7-3-19 12-14 15 6 0 12-7 9-10M35 10c3 8-3 20-12 25" strokeWidth="2" stroke="#ccc" /></Hex>}
          b={<Hex><path d="M17 34L32 15" strokeWidth="3.500" /><rect x="12" y="31" width="7" height="7" fill="#111" stroke="#fff" strokeWidth="2" /><rect x="29" y="11" width="7" height="7" fill="#111" stroke="#fff" strokeWidth="2" /></Hex>} /> },
        { at: 194, node: <Col
          a={<Hex><path d="M11 19l21-9 9 14-27 12z" fill="#777" strokeWidth="3" /><path d="M20 30l3-10 9-3" stroke="#ccc" strokeWidth="2" /></Hex>}
          b={<Hex><path d="M9 12l15 24L39 12M9 36l15-24 15 24" stroke="#888" strokeWidth="2" /><path d="M24 13l8 11-8 11-8-11z" strokeWidth="3" fill="#222" /></Hex>} /> },
        { at: 257, node: <VSep /> },
        { at: 271, node: <Col
          a={<Hex><path d="M12 17l11-7 13 5v18l-11 7-13-5z" fill="#bcbcbc" strokeWidth="2" /><path d="M12 17l13 4v18M25 21l11-6" stroke="#fff" strokeWidth="1.500" /></Hex>}
          b={<Hex><path d="M11 25L22 9l14 6v10L23 40l-12-6z" fill="#cfcfcf" strokeWidth="1.500" /><path d="M22 9l3 10 9 3 2-7z" fill="#777" stroke="#fff" strokeWidth="1" /></Hex>} /> },
        { at: 327, node: <Col
          a={<Hex><path d="M24 7v34M14 11v26M34 11v26M9 14h30M7 24h34M9 34h30M14 14l20 20M34 14L14 34" stroke="#ccc" strokeWidth="1.500" /></Hex>}
          b={<Hex><path d="M19 11h16v28l-14-4-10-3z" fill="#aaa" strokeWidth="1.500" /><path d="M15 23h20M27 11v26" stroke="#eee" strokeWidth="1" /></Hex>} /> },
      ]} />
      <Group name="Primitive" className="ml-[7px] w-[121px]" items={[
        { at: 6, node: <Col
          a={<Hex><circle cx="24" cy="24" r="12" fill="#fff" stroke="none" /><path d="M33 16c2 7-2 14-9 14 5-4 3-8 9-14z" fill="#111" stroke="#111" strokeWidth="3" /></Hex>}
          b={<Hex><text x="24" y="36" textAnchor="middle" className="font-['Liberation_Serif'] text-[34px] font-bold" fill="#fff" stroke="none">7</text></Hex>} /> },
        { at: 62, node: <Col
          a={<Hex><text x="23.500" y="35" textAnchor="middle" className="font-['Liberation_Serif'] text-[30px] font-bold tracking-[-2px]" fill="#ddd" stroke="none">0.1</text></Hex>}
          b={<Hex><text x="24" y="36" textAnchor="middle" className="font-['Liberation_Serif'] text-[38px] font-bold" fill="#fff" stroke="none">A</text></Hex>} /> },
      ]} />
      <Group name="Input" className="ml-[7px] w-[273px]" items={[
        { at: 6, node: <Col a={<Tile><path d="M24 12v16" strokeWidth="4" /><path d="M16 24h16l-8 10z" fill="#111" stroke="none" /><path d="M7 36h34v2H7zM9 37v6M14 37v6M19 37v6M24 37v6M29 37v6M34 37v6M39 37v6" strokeWidth="1.500" /></Tile>} b={<Squiggle />} /> },
        { at: 69, node: <VSep /> },
        { at: 82, node: <Col
          a={<Tile><rect x="14" y="7" width="20" height="34" fill="#111" stroke="#000" /><rect x="16" y="8" width="16" height="15" fill="#e5e5e5" stroke="none" /></Tile>}
          b={<Bare><circle cx="24" cy="24" r="19" stroke="#8a8a8a" strokeWidth="5" /><circle cx="23" cy="24" r="13" fill="#222" stroke="#555" /><path d="M34 18l10 6-10 6z" fill="#222" stroke="none" /></Bare>} /> },
        { at: 138, node: <Col
          a={<Tile fill="#9a9a9a"><path d="M26 3l-9 9h13M24 14l-3 5" stroke="#666" strokeWidth="3.500" /><path d="M32 22h-9l-3 9c9-2 12 2 10 7-2 5-8 6-12 3" stroke="#2c2c2c" strokeWidth="4" /></Tile>}
          b={<Tile><path d="M6 8h36v9H6zM6 20h36v9H6zM6 32h36v9H6z" fill="#e6e6e6" strokeWidth="2.500" /></Tile>} /> },
        { at: 201, node: <VSep /> },
        { at: 214, node: <Col
          a={<Tile fill="url(#pnk)"><path d="M2 32h44" strokeWidth="2" /><circle cx="4" cy="32" r="4" fill="#fff" /><circle cx="33" cy="32" r="4" fill="#fff" /></Tile>}
          b={<Tile fill="#8fd346"><path d="M3 3h14v10H3z" fill="#e3f8c5" stroke="none" /><path d="M24 13h11v11H24zM13 24h11v11H13z" fill="#2f7a1a" stroke="none" /><path d="M3 24h10v20H3zM35 3h10v20H35z" fill="#4fae2a" stroke="none" /><path d="M13 35h11v9H13z" fill="#123a08" stroke="none" /><path d="M35 28h10v16H35z" fill="#7df0b0" stroke="none" /><path d="M13 13h11v11H13zM24 24h11v9H24z" fill="#a8ec4e" stroke="none" /></Tile>} /> },
      ]} />
      <Group name="Util" className="ml-[7px] w-[217px]" items={[
        { at: 6, node: <Col
          a={<Bare><path d="M27 8L14 30M28 8c5 8 6 16 6 24" stroke="#6b1a12" strokeWidth="2.500" /><path d="M29 3c-12-1-18 6-19 15 10 0 17-6 19-15z" fill="#6fae2c" stroke="#3b6b14" strokeWidth="1" /><circle cx="13" cy="33" r="9" fill="#cf2218" stroke="#7c100c" strokeWidth="1" /><circle cx="33" cy="37" r="9" fill="#cf2218" stroke="#7c100c" strokeWidth="1" /><circle cx="10" cy="30" r="2" fill="#f99" stroke="none" /><circle cx="30" cy="34" r="2" fill="#f99" stroke="none" /></Bare>}
          b={<Tile><path d="M24 45c0-10 1-12-2-18M24 32c4-4 8-6 13-7M22 28c-3-5-9-6-14-7M24 30c0-8 1-14 0-22" strokeWidth="3.500" /><path d="M16 26l-4-12M30 27l4-14M20 20l-4-13M26 18l5-11M34 26l7-7M12 22l-5-8M8 26l5-2M37 14l-4 4" strokeWidth="2" /><path d="M3 42h42" strokeWidth="4" /></Tile>} /> },
        { at: 69, node: <VSep /> },
        { at: 82, node: <Col
          a={<Bare><path d="M5 19h17v-9l18 14-18 14v-9H5z" fill="#444" stroke="#0f0f0f" strokeWidth="3" /><path d="M7 20h16v-8" stroke="#999" strokeWidth="1" /></Bare>}
          b={<Bare><path d="M4 18h18v-10l20 16-20 16v-10H4z" fill="#e4e4e4" stroke="#777" strokeWidth="1" /></Bare>} /> },
        { at: 145, node: <VSep /> },
        { at: 158, node: <Col
          a={<Bare><ellipse cx="20" cy="19" rx="12" ry="16" fill="#c9c9c9" stroke="#888" strokeWidth="1" transform="rotate(30 20 19)" /><ellipse cx="18" cy="21" rx="4" ry="5" fill="#444" stroke="#888" /><ellipse cx="32" cy="32" rx="9" ry="14" fill="#e2588f" stroke="#7d1a47" strokeWidth="1" transform="rotate(30 32 32)" /><circle cx="30" cy="32" r="4" fill="#8c1238" stroke="none" /></Bare>}
          b={<Bare><path d="M21 5h6v16l10 20c0 4-28 4-28 0l12-20z" fill="#e9dfe4" stroke="#8a3a60" strokeWidth="1.500" /><path d="M18 26h12l7 15c0 4-28 4-28 0z" fill="#cc3f7e" stroke="none" /></Bare>} /> },
      ]} />
      <Group name="OpenNest" className="ml-[7px] w-[349px]" items={[
        { at: 6, node: <Col
          a={<Bare><path d="M21 8l12-5 9 7-3 8-10 0zM4 17l8-7 12 6-4 9-14 2zM14 30l12-4-8 18H4zM28 26l6-5 7 21h-7z" fill="#060606" stroke="#060606" strokeLinejoin="round" /></Bare>}
          b={<Bare><path d="M7 43C8 24 20 9 41 8M16 43c1-14 10-25 25-25M25 43c1-8 7-15 16-15" /></Bare>} /> },
        { at: 69, node: <VSep /> },
        { at: 84, node: <Col a={<Bare><path d="M8 5l32 8-1 9-13-3-5 24-7-1 5-25-11-3z" /></Bare>} b={<Bare />} /> },
        { at: 145, node: <VSep /> },
        { at: 158, node: <Col a={<Bare><path d="M14 4l26 17-1 12-29-14zM10 19c-6-3-2-14 4-15 8 2 4 14-4 15M13 22l-3 8 24 15V33" /></Bare>} b={<Bare />} /> },
        { at: 221, node: <VSep /> },
        { at: 234, node: <Col
          a={<Bare><path d="M14 12h29L33 38H4z" /><path d="M17 17h21l-8 18H9M3 42h28l5-14" stroke="#777" strokeWidth="1.500" /></Bare>}
          b={<Bare><circle cx="14" cy="13" r="9" /><circle cx="36" cy="13" r="9" /><circle cx="13" cy="36" r="9" /><circle cx="35" cy="36" r="9" /></Bare>} /> },
        { at: 291, node: <Col
          a={<Bare><path d="M16 3h26L37 44H4L5 28zM4 28h24L42 3M28 28v16" /><path d="M16 3v22h26" stroke="#888" /><path d="M6 30h12l-10 12z" fill="#ddd" stroke="none" /></Bare>}
          b={<Bare><path d="M9 3l31 9 1 28-26-5L4 22zM9 3l11 15 20-6M20 18l-5 17" /><path d="M26 24h3M34 23h3M25 31h3M33 31h3M13 18h2M17 9h3" strokeWidth="3.500" /></Bare>} /> },
      ]} />
    </div>
  );
}

const Btn = ({ w, blue = false, children }: { w: string; blue?: boolean; children: React.ReactNode }) => (
  <div className={"flex h-10 shrink-0 items-center justify-center rounded-[10px] shadow-[inset_0_1px_0_#7a747c] " + (blue ? "bg-[#2a63cf] " : "bg-[#625b65] ") + w}>
    <svg viewBox="0 0 32 32" className="h-8 w-8" fill="none" stroke="#222" strokeWidth="2">{children}</svg>
  </div>
);
const BSep = () => <div className="h-8 w-[2px] shrink-0 bg-[#443d46]" />;

function CanvasToolbar() {
  return (
    <Line
      className="h-[62px] shrink-0 border-t-2 border-[#3f3841] bg-[#2d262e]"
      items={[
        { at: 1, node: <Btn w="w-[51px]"><path d="M9 4h10l3 3v10H9z" fill="#eee" stroke="#bbb" /><path d="M4 13h8l3-3h12v19H4z" fill="#7fc24a" stroke="#b9e08a" strokeWidth="1.500" /></Btn> },
        { at: 56, node: <Btn w="w-[52px]"><path d="M3 3h23l3 3v23H3z" fill="#2b65d0" stroke="#9bbcf0" strokeWidth="1.500" /><path d="M8 4h16v11H8z" fill="#f4f4f4" stroke="none" /><path d="M9 20h13v9H9z" fill="#ddd" stroke="none" /><path d="M11 22h4v6h-4z" fill="#2b65d0" stroke="none" /></Btn> },
        { at: 116, node: <BSep /> },
        { at: 128, node: <div className="flex h-10 w-[118px] shrink-0 items-center justify-between rounded-[10px] border-2 border-[#453e47] bg-[#332c35] pl-[4px] pr-[2px] text-[25px] tracking-[-0.300px] text-[#ebe9ec]">100%<div className="flex h-8 w-8 items-center justify-center rounded-[8px] bg-[#2f6fd6]"><svg viewBox="0 0 20 20" className="h-5 w-5" fill="none" stroke="#fff" strokeWidth="3" strokeLinecap="round"><path d="M5 7l5 6 5-6" /></svg></div></div> },
        { at: 252, node: <Btn w="w-[64px]"><path d="M2 10V3h8M22 3h8v7M30 22v7h-8M10 29H2v-7" strokeWidth="4" stroke="#1b1b1b" /><path d="M13 13l6 6M19 13l-6 6M16 4v4M16 24v4M3 16h4M25 16h4" stroke="#222" /></Btn> },
        { at: 338, node: <Btn w="w-[64px]"><path d="M3 16c6-11 20-11 26 0-6 10-20 10-26 0z" fill="#e8f4fa" stroke="#556" strokeWidth="1.500" /><circle cx="16" cy="15" r="6.500" fill="#3a9bdc" stroke="#1f5f95" strokeWidth="1" /><circle cx="16" cy="15" r="3" fill="#0b1f3a" stroke="none" /></Btn> },
        { at: 422, node: <Btn w="w-[52px]"><path d="M28 4l-3 14-7 8-4-5z" fill="#e23a28" stroke="#7a1a10" strokeWidth="1" /><path d="M16 27l-3-5 4-4 4 3z" fill="#e8b13c" stroke="none" /><path d="M3 8c8 2 5 10 3 14-1 5 5 6 9 4" stroke="#4a1a14" /></Btn> },
        { at: 988, node: <Btn w="w-[52px]"><path d="M10 8l7-6 6 5v9l-6 3-7-2z" fill="#dcdcdc" stroke="#aaa" strokeWidth="1" /><ellipse cx="16" cy="22" rx="9" ry="6" fill="#222" stroke="#999" strokeWidth="1" /></Btn> },
        { at: 1042, node: <Btn w="w-[52px]"><path d="M6 19L14 4l11 5v9L17 28 7 25zM14 4l1 9 9 3M10 15l5 3-3 8M19 12l3 5" stroke="#3c373e" /></Btn> },
        { at: 1096, node: <Btn w="w-[52px]" blue><path d="M3 20L13 4l5-2 10 6v9L18 29l-6 1-9-4z" fill="#c4261c" stroke="#7a0f0a" strokeWidth="1" strokeLinejoin="round" /><ellipse cx="20" cy="9" rx="5" ry="3.500" fill="#7a0f0a" stroke="none" transform="rotate(20 20 9)" /></Btn> },
        { at: 1162, node: <BSep /> },
        { at: 1178, node: <Btn w="w-[51px]"><path d="M12 7l7-4 9 6v9l-8 10-8-3 4-9z" fill="#37a99c" stroke="#1b625b" strokeWidth="1" /><path d="M6 4l6 6M6 29l7-5" stroke="#111" /></Btn> },
        { at: 1230, node: <Btn w="w-[52px]"><path d="M12 8l8-5 9 5-2 12-7 4z" fill="#6fae2c" stroke="#3c6b12" strokeWidth="1" /><path d="M3 19l7-8 10 14-4 4-10-3z" fill="#e5e5e5" stroke="#aaa" strokeWidth="1" /><path d="M8 7l15 20" stroke="#111" /></Btn> },
        { at: 1283, node: <Btn w="w-[52px]"><circle cx="16" cy="16" r="11.500" fill="#e4e4e4" stroke="none" /><path d="M16 4.500a11.500 11.500 0 000 23z" fill="#e2872c" stroke="none" /><circle cx="16" cy="16" r="11.500" stroke="#6d4a22" strokeWidth="1" /></Btn> },
        { at: 1339, node: <BSep /> },
        { at: 1344, node: <Btn w="w-[64px]"><circle cx="16" cy="16" r="11" fill="#79b4ee" stroke="#1c3f93" /><circle cx="13" cy="12" r="5" fill="#d8ecfd" stroke="none" /></Btn> },
      ]}
    />
  );
}

function Grip({ x, y, left = false }: { x: number; y: number; left?: boolean }) {
  return <path d={left ? `M${x} ${y - 9}a8 9 0 000 18` : `M${x} ${y - 9}a8 9 0 010 18`} fill="#fff" stroke="#000" strokeWidth="3.500" />;
}

const capsule =
  "absolute rounded-[6px] border-[2.500px] border-[#303034] bg-[linear-gradient(#f0f0f4,#c9c9d2_16px,#b4b4c4_17px,#9c9ba8)] shadow-[0_-2px_1px_#fff,0_2px_3px_rgba(0,0,0,0.25)]";
const core =
  "absolute flex items-center justify-center rounded-[7px] border-[2.500px] border-black bg-[linear-gradient(#b8b8b8,#7d7d7d_12px,#5a5a5a_13px,#424242)] font-black text-white text-[23.500px] leading-none";

function NodeText({ x, y, children, className = "" }: { x: number; y: number; children: React.ReactNode; className?: string }) {
  return <div className={"absolute -translate-y-1/2 whitespace-nowrap leading-none text-[#111] " + (className || "text-[19px]")} style={{ left: x, top: y }}>{children}</div>;
}
const Vert = ({ children }: { children: React.ReactNode }) => <span className="rotate-180 [writing-mode:vertical-rl]">{children}</span>;

function Canvas() {
  return (
    <div className="relative h-[1362px] w-[1426px] shrink-0 overflow-hidden bg-[#dcd9d2]">
      <div className="absolute -left-[1336px] -top-[338px] h-[1730px] w-[2786px]">
        <svg viewBox="0 0 2786 1730" className="absolute inset-0 h-full w-full" fill="none">
          <defs><linearGradient id="gw" gradientUnits="userSpaceOnUse" x1="1878" y1="0" x2="2095" y2="0"><stop offset="0" stopColor="#8ec44c" /><stop offset=".5" stopColor="#87985f" /><stop offset="1" stopColor="#a3a39b" /></linearGradient></defs>
          <g stroke="#c1beb7" strokeWidth="3">
            {Array.from({ length: 14 }, (_, i) => <path key={i} d={`M1336 ${386.5 + i * 100}H2764`} />)}
            {Array.from({ length: 5 }, (_, i) => <path key={i} d={`M${1458.5 + i * 300} 338V1700`} />)}
          </g>
          <g stroke="#5a5955" strokeWidth="6">
            <path d="M1449 325C1458 395 1480 428 1540 428" /><path d="M1577 325C1584 350 1588 375 1589 400" />
            <path d="M1330 479L1540 478" />
            <path d="M1584 509C1580 590 1562 660 1562 733C1562 860 1610 958 1798 958" />
            <path d="M1330 770C1440 900 1580 1008 1798 1008" />
            <path d="M1668 454C1740 454 1690 574 1753 574" />
            <path d="M1928 985C2010 985 2015 1016 2097 1016" />
            <path d="M1834 1286C1965 1286 1965 1136 2097 1136" />
            <path d="M2228 1036C2632 1036 1926 455 2344 455" />
            <path d="M2473 455C2580 455 2680 440 2766 428" />
            <path d="M1878 1100C1986 1100 1986 1056 2097 1056" stroke="url(#gw)" />
          </g>
          <Grip x={1546} y={428} left /><Grip x={1546} y={478} left /><Grip x={1659} y={454} />
          <Grip x={1762} y={574} left /><Grip x={2083} y={574} />
          <Grip x={1806} y={958} left /><Grip x={1806} y={1008} left /><Grip x={1919} y={985} />
          <Grip x={2104} y={1016} left /><Grip x={2104} y={1056} left /><Grip x={2104} y={1096} left /><Grip x={2104} y={1136} left />
          <Grip x={2219} y={1036} /><Grip x={2219} y={1116} /><Grip x={1869} y={1100} />
          <Grip x={1618} y={1286} left /><Grip x={1825} y={1286} /><Grip x={2351} y={455} left /><Grip x={2464} y={455} />
          <Grip x={1831} y={346} left /><Grip x={2537} y={346} /><Grip x={1342} y={401} /><Grip x={1350} y={552} /><Grip x={1412} y={724} />
        </svg>

        <div className="absolute left-[1320px] top-[342px] h-[119px] w-[24px] rounded-[6px] border-[2.500px] border-[#303034] bg-[linear-gradient(#ccc568_30px,#111_30px,#111_32px,#b5b05e_33px,#d7cf6a_66px,#fff582_67px)] shadow-[0_-2px_1px_#fff]" />
        <div className="absolute left-[1320px] top-[494px] h-[119px] w-[31px] rounded-[6px] border-[2.500px] border-[#303034] bg-[linear-gradient(#ccc568_30px,#111_30px,#111_32px,#b5b05e_33px,#d7cf6a_66px,#fff582_67px)] shadow-[0_-2px_1px_#fff]" />
        <div className="absolute left-[1320px] top-[660px] h-[129px] w-[93px] rounded-[6px] border-[2.500px] border-[#303034] bg-[linear-gradient(#8bc7c6_29px,#111_29px,#111_31px,#87cfcb_32px,#a9fbf7_52px)] shadow-[0_-2px_1px_#fff]" />
        <NodeText x={1339} y={740} className="font-['Liberation_Mono'] text-[15.500px] font-bold">see.</NodeText>

        <div className="absolute left-[1830px] top-[320px] h-[91px] w-[708px] rounded-[6px] border-[2.500px] border-[#303034] bg-[#a9fbf7] pr-[20px] pt-[19px] text-center font-['Liberation_Mono'] text-[16px] font-bold leading-[22px] text-[#0c0c0c]">
          The result is a Box we will use as a void to remove any part of the<br />design model that projects below the origin plane.
        </div>

        <div className={capsule + " left-[1545px] top-[399px] h-[111px] w-[115px]"} />
        <div className={core + " left-[1575px] top-[403px] h-[103px] w-[51px]"}><Vert>BoxRec</Vert></div>
        <NodeText x={1557} y={431}>R</NodeText><NodeText x={1556} y={481}>H</NodeText><NodeText x={1630} y={456}>B</NodeText>

        <div className={capsule + " left-[1805px] top-[929px] h-[110px] w-[115px]"} />
        <div className={core + " left-[1835px] top-[933px] h-[103px] w-[51px]"}><Vert>BoxRec</Vert></div>
        <NodeText x={1817} y={961}>R</NodeText><NodeText x={1816} y={1011}>H</NodeText><NodeText x={1890} y={986}>B</NodeText>

        <div className={capsule + " left-[2103px] top-[991px] h-[171px] w-[117px]"} />
        <div className={core + " left-[2133px] top-[995px] h-[163px] w-[51px]"}><Vert>Rot3D</Vert></div>
        <NodeText x={2112} y={1018}>G</NodeText><NodeText x={2114} y={1058}>A</NodeText><NodeText x={2113} y={1098}>C</NodeText><NodeText x={2114} y={1138}>X</NodeText>
        <NodeText x={2188} y={1038}>G</NodeText><NodeText x={2188} y={1118}>X</NodeText>

        <div className="absolute left-[1761px] top-[512px] h-[128px] w-[323px] rounded-[7px] border-[2.500px] border-[#303034] bg-[linear-gradient(#ccc568_30px,#111_30px,#111_32px,#aca759_33px,#d4cd69_50px,#d7cf6a_64px,#fff582_65px)] shadow-[0_-2px_1px_#fff]" />
        <div className="absolute left-[1777px] top-[546px] h-[92px] w-[2px] bg-black/15" />
        <NodeText x={1868} y={530} className="text-[20px] tracking-[0.200px]">void height</NodeText>
        <NodeText x={2034} y={562} className="font-['Liberation_Mono'] text-[15.500px]">{"{0}"}</NodeText>
        <NodeText x={1766} y={595} className="font-['Liberation_Mono'] text-[15px]">0</NodeText>
        <NodeText x={1780} y={595} className="font-['Liberation_Mono'] text-[15.500px]">Box</NodeText>

        <div className="absolute left-[1553px] top-[1079px] flex h-[42px] w-[317px] rounded-[7px] border-[2.500px] border-[#1f4a12] bg-[linear-gradient(#dff7b8,#c2ee8c_9px,#b2e86c_10px,#a2d95a)] shadow-[0_-2px_1px_#fff]">
          <div className="h-full w-[74px] rounded-l-[5px] border-r-2 border-[#1f4a12] bg-[linear-gradient(#cdeaa4,#a3d568_9px,#83c643_10px,#74b634)]" />
        </div>
        <svg viewBox="0 0 206 14" className="absolute left-[1646px] top-[1088px] h-[14px] w-[206px]" stroke="#7ba64b" strokeWidth="2"><path d="M1 13H84M138 13H204M2 1V13M22 5V13M42 5V13M62 5V13M102 1V6M142 5V13M162 5V13M182 5V13M202 1V13" /></svg>
        <div className="absolute left-[1716px] top-[1092px] h-[17px] w-[16px] rounded-full border-[4px] border-black bg-white" />
        <NodeText x={1563} y={1102} className="text-[20px]">Angle</NodeText><NodeText x={1734} y={1102} className="text-[21px] tracking-[0.300px]">1.130</NodeText>

        <div className="absolute left-[1617px] top-[1185px] flex h-[203px] w-[209px] items-center justify-center rounded-[7px] border-[2.500px] border-[#303034] bg-[#fff582] pr-[18px] pt-[22px] font-['Liberation_Mono'] text-[16px] text-[#222] shadow-[0_-2px_1px_#fff]">10,0,0</div>

        <div className={capsule + " left-[2350px] top-[433px] flex h-[43px] w-[115px] items-center justify-center whitespace-nowrap pt-[4px] text-[20px] text-[#111]"}>Brep void</div>

        <div className="absolute left-[1336px] top-[1643px] flex h-[57px] w-[126px] items-center border-2 border-l-0 border-black bg-[linear-gradient(#f4f4f4,#d5d5d5_20px,#c2c2c2_21px,#ababab)]">
          <div className="ml-[10px] flex h-[35px] w-[36px] shrink-0 items-center justify-center rounded-[6px] border-2 border-[#777] bg-[#ececec]"><svg viewBox="0 0 16 16" className="h-4 w-4"><path d="M8 0v16M0 8h16" stroke="#000" strokeWidth="3.500" /></svg></div>
          <div className="ml-[14px] shrink-0"><Squiggle /></div>
          <div className="ml-[5px] h-full grow bg-[linear-gradient(#b5b5b5_20px,#8c8c8c_21px)]" />
        </div>

        <svg viewBox="0 0 110 110" className="absolute left-[2648px] top-[1586px] h-[110px] w-[110px]" fill="none">
          <defs><radialGradient id="cp"><stop offset="0" stopColor="#ececec" /><stop offset="1" stopColor="#8a8a8a" /></radialGradient></defs>
          <path d="M14 41c3-10 9-17 16-20M38 15l12-3M60 12c20 0 36 17 37 41" stroke="#000" strokeWidth="7" strokeLinecap="round" />
          <path d="M6 12l14 2 2 11-13 1z" fill="#000" />
          <circle cx="54.700" cy="54.700" r="38.500" fill="url(#cp)" stroke="#222" strokeWidth="5" /><circle cx="54.700" cy="54.700" r="37.500" stroke="#fff" strokeWidth="4" />
          <path d="M22 33l12 3-3-13zM75 21l-3 13 12-3zM26 75l10-2-1 12zM74 71l12 3-7 10z" fill="#fff" />
        </svg>
      </div>
    </div>
  );
}

function Grasshopper() {
  return (
    <div className="absolute left-[1334px] top-0 flex h-[1760px] w-[1430px] flex-col overflow-hidden rounded-t-[20px] border-2 border-[#77717a] bg-[#2d262e] shadow-[0_0_0_1px_#000,0_20px_70px_rgba(0,0,0,0.65)]">
      <svg width="0" height="0" className="absolute">
        <defs>
          <linearGradient id="hexf" x2="0" y2="1"><stop offset="0" stopColor="#4c4c4c" /><stop offset=".5" stopColor="#1a1a1a" /><stop offset="1" stopColor="#262626" /></linearGradient>
          <linearGradient id="gry" x2="0" y2="1"><stop offset="0" stopColor="#a4a4a4" /><stop offset="1" stopColor="#dedede" /></linearGradient>
          <linearGradient id="yel" x2="0" y2="1"><stop offset="0" stopColor="#fbd25c" /><stop offset=".6" stopColor="#fbc640" /><stop offset="1" stopColor="#ffe96c" /></linearGradient>
          <linearGradient id="pnk" x2="1" y2="1"><stop offset="0" stopColor="#f5c3d6" /><stop offset=".5" stopColor="#ee4f91" /><stop offset="1" stopColor="#b02a92" /></linearGradient>
        </defs>
      </svg>
      <Line
        className="h-[54px] shrink-0 bg-[#403a41]"
        items={[
          { at: 14, node: <div className="h-6 w-6 shrink-0 rounded-full bg-[#ee6a5e]" /> },
          { at: 54, node: <div className="h-6 w-6 shrink-0 rounded-full bg-[#f5be4f]" /> },
          { at: 94, node: <div className="h-6 w-6 shrink-0 rounded-full bg-[#61c554]" /> },
          { at: 454, node: <span className="pb-[3px] text-[26px] font-bold tracking-[-0.080px] text-[#bab5bb]">Grasshopper - CellPhoneStand_Simple*</span> },
        ]}
      />
      <div className="h-[48px] shrink-0 border-t-2 border-black bg-[#323232] font-['Liberation_Sans'] text-[23px] text-[#9b9b9b]">
        <Line
          className="h-[46px] border-b-2 border-[#292929]"
          items={[
            { at: 0, node: <div className="flex h-[48px] w-[67px] shrink-0 items-center justify-center rounded-t-[10px] border-r-2 border-[#262626] bg-[#444] pb-[8px] pr-[2px] text-[#f2f2f2]">Prm</div> },
            ...([["Math", 1414], ["Set", 1490], ["Vec", 1550], ["Crv", 1614], ["Srf", 1674], ["Msh", 1728], ["Int", 1796], ["Trns", 1846], ["Dis", 1916], ["Squid (ShapeDiver edition)", 1974], ["PanelingTools", 2274], ["Kangaroo2", 2442], ["Human", 2580], ["S", 2688]] as [string, number][]).map(([t, x]) => ({ at: x - 1336, node: t })),
          ]}
        />
      </div>
      <Ribbon />
      <div className="h-[2px] shrink-0 bg-[#343434]" />
      <CanvasToolbar />
      <Canvas />
      <Line
        className="h-[46px] shrink-0 border-t-2 border-[#3c353e] text-[24px] text-[#e3e0e4]"
        items={[
          { at: 3, node: <svg viewBox="0 0 32 32" className="h-8 w-8 shrink-0"><circle cx="16" cy="16" r="14" fill="#3f9fd0" stroke="#16308c" strokeWidth="3" /><path d="M16 5v14M16 23v4" stroke="#fff" strokeWidth="5" /></svg> },
          { at: 38, node: "Save successfully completed... (120 seconds ago)" },
          { at: 1192, node: "1.0.0007" },
        ]}
      />
    </div>
  );
}

export default function App() {
  return (
    <div className="relative h-[1730px] w-[2786px] overflow-hidden bg-[#231668] font-['Inter',sans-serif]">
      <div className="flex h-full items-stretch justify-between bg-[linear-gradient(90deg,#24176a_0,#1b145e_22%,#201777_26%,#2b1a92_40%,#3a1fa0_48%,#3a1fa0)]">
        <div />
        <div className="w-[40px] bg-[linear-gradient(172deg,#c9689f_0,#b85f92_9%,#8f4d70_14%,#95527a_30%,#a3568a_52%,#8b3f93_53%,#7b2c98_77%,#5b22a6_78%,#5b1fae_88%,#3f1aa4_89%,#3518a0)]">
          <Stack
            className="pl-[18px] text-[21px] font-semibold text-[#cbc9cc]"
            items={[
              { at: 205, node: <span className="w-[40px] bg-[#8d8589] py-1">M</span> }, { at: 241, node: <span className="[text-shadow:0_0_6px_#000]">al</span> },
              { at: 275, node: <span className="[text-shadow:0_0_6px_#000]">/p</span> }, { at: 382, node: <span className="-ml-[2px]">.jp</span> }, { at: 541, node: <span className="-ml-1">df</span> },
              { at: 1217, node: <span>cs</span> }, { at: 1456, node: <span className="-ml-[10px]">PM</span> }, { at: 1664, node: <span className="-ml-[10px]">AM</span> },
            ]}
          />
        </div>
      </div>
      <Rhino />
      <Grasshopper />
    </div>
  );
}
